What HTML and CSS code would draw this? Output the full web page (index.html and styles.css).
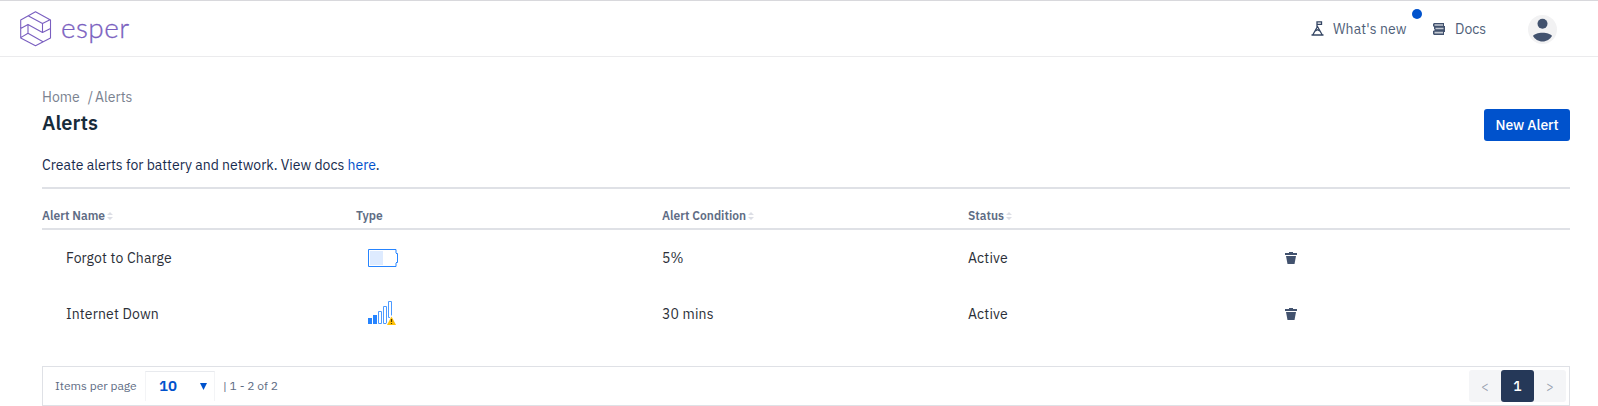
FILE: index.html
```html
<!DOCTYPE html>
<html lang="en">
<head>
<meta charset="utf-8">
<title>Alerts</title>
<link rel="stylesheet" href="styles.css">
</head>
<body>
<svg class="defs" width="0" height="0">
  <symbol id="sort" viewBox="0 0 6 8"><path d="M0 3 3 0l3 3zM0 5h6L3 8z" fill="#dcdee5"/></symbol>
  <symbol id="trash" viewBox="0 0 12 12"><path d="M4 0h4v1h4v2H0V1h4zM1 4h10l-1.500 8h-7z" fill="#42526e"/></symbol>
</svg>
<header class="topbar">
  <div class="brand">
    <svg width="32" height="36" viewBox="0 0 32 36" fill="none" stroke="#7a5fc0" stroke-width="1.1" stroke-linejoin="round">
      <path d="M15.500.8 30.500 9v18L15.500 34.800.7 27V9zM8 4.800 22.500 12.500 30.500 8.500M22.500 12.500V21.500L8 13.400.7 17.500M22.500 21.500 30.500 17.500M8 13.400v8.800L.7 26.600M8 22.200 23 30.800"/>
    </svg>
    <span class="wordmark">esper</span>
  </div>
  <nav class="nav">
    <a class="nav-item news">
      <svg width="13" height="15" viewBox="0 0 13 15" fill="none" stroke="#344563" stroke-width="1.3"><path d="M.5 14h12M2 13.500 6.500 5.500l4.500 8M6 6V.8h4.500v2.600H6M4.300 10l2.200-1.300L8.700 10"/></svg>
      <span>What's new</span><i class="dot"></i>
    </a>
    <a class="nav-item docs">
      <svg width="12" height="12" viewBox="0 0 12 12"><path d="M1 0h10v3h1v6h-1v3H1L0 11V8l2-1-1-1V4L0 3V1z" fill="#42526e"/><path d="M1.500 1.200h8.500v1.500H1.500zM2.500 4.700h8v1.600h-8zM1.500 8.800h8.500v1.700H1.500z" fill="#c4c9d2"/></svg>
      <span>Docs</span>
    </a>
    <svg class="avatar" width="29" height="29" viewBox="0 0 29 29"><circle cx="14.500" cy="14.500" r="14.500" fill="#f2f2f3"/><g fill="#42526e"><circle cx="14.500" cy="8.700" r="5"/><path d="M5 21c1-2 5-3.300 9.500-3.300S23 19 24 21c-1.800 3-5.300 5.500-9.500 5.500S6.800 24 5 21z"/></g></svg>
  </nav>
</header>
<main class="page">
  <div class="heading">
    <div>
      <div class="crumbs"><span>Home</span><span class="slash">/</span><span>Alerts</span></div>
      <h1>Alerts</h1>
    </div>
    <button class="new">New Alert</button>
  </div>
  <p class="intro">Create alerts for battery and network. View docs <a>here</a>.</p>
  <div class="table">
    <div class="row head">
      <div><span>Alert Name</span><svg width="6" height="8"><use href="#sort"/></svg></div>
      <div><span>Type</span></div>
      <div><span>Alert Condition</span><svg width="6" height="8"><use href="#sort"/></svg></div>
      <div><span>Status</span><svg width="6" height="8"><use href="#sort"/></svg></div>
      <div></div>
    </div>
    <div class="row">
      <div class="name">Forgot to Charge</div>
      <div class="type"><svg width="30" height="18" viewBox="0 0 30 18"><path d="M28 4V.5H.5v17H28V14M28 4.500h1.500v9H28" fill="none" stroke="#2684ff"/><path d="M2 2h13v14H2z" fill="#deebff"/></svg></div>
      <div>5%</div>
      <div>Active</div>
      <div class="action"><svg width="12" height="12"><use href="#trash"/></svg></div>
    </div>
    <div class="row">
      <div class="name">Internet Down</div>
      <div class="type signal"><svg width="28" height="24" viewBox="0 0 28 24"><path d="M0 17h4v6H0zM5 14h4v9H5z" fill="#2684ff"/><path d="M10.500 10.500h3v12h-3zM15.500 5.500h3v17h-3zM20.500.5h3v16h-3z" fill="#fff" stroke="#4c9aff"/><path d="M23.500 14 29 24H17.500z" fill="#fff"/><path d="M23.500 15.500 28 24h-9z" fill="#ffc107"/><path d="M23.500 18v3M23.500 22v1" stroke="#4d3a00" stroke-width="1.200"/></svg></div>
      <div>30 mins</div>
      <div>Active</div>
      <div class="action"><svg width="12" height="12"><use href="#trash"/></svg></div>
    </div>
  </div>
  <footer class="pager">
    <span class="per">Items per page</span>
    <div class="select"><b>10</b><svg width="7" height="7" viewBox="0 0 7 7"><path d="M0 0h7L3.500 7z" fill="#0052cc"/></svg></div>
    <span class="range">| 1 - 2 of 2</span>
    <div class="pages"><span>&lt;</span><span class="current">1</span><span>&gt;</span></div>
  </footer>
</main>
</body>
</html>
```
FILE: styles.css
```css
* { box-sizing: border-box; }
body { margin: 0; height: 406px; overflow: hidden; background: #fff; color: #2b2f38; font: 14px/20px "IBM Plex Sans", Roboto, sans-serif; }
svg { display: block; flex: none; }
.defs { position: absolute; }
.topbar { height: 57px; border-top: 1px solid #d8d8dc; border-bottom: 1px solid #ebebed; display: flex; justify-content: space-between; align-items: center; padding: 0 41px 0 20px; }
.brand { display: flex; align-items: center; gap: 9px; color: #7a5fc0; }
.wordmark { font: 300 28px/36px Lato, sans-serif; letter-spacing: 0.4px; padding-bottom: 4px; -webkit-text-stroke: 0.3px #7a5fc0; }
.nav { display: flex; align-items: center; color: #505f79; }
.nav-item { display: flex; align-items: center; }
.nav-item span { padding-top: 1px; }
.news { position: relative; width: 122px; gap: 9px; letter-spacing: 0.1px; }
.dot { position: absolute; left: 101px; top: -9px; width: 10px; height: 10px; border-radius: 50%; background: #0052cc; }
.docs { width: 95px; gap: 10px; }
.avatar { margin-top: 1px; }
.page { padding: 30px 28px 0 42px; }
.heading { display: flex; justify-content: space-between; height: 56px; }
.crumbs { display: flex; color: #7a8290; }
.slash { margin: 0 2px 0 8px; }
h1 { margin: 4px 0 0; font-size: 20px; line-height: 24px; font-weight: 600; color: #172b3a; }
.new { align-self: flex-start; margin-top: 22px; width: 86px; height: 32px; padding: 1px 0 0; border: 0; border-radius: 3px; background: #0052cc; color: #fff; font: 500 14px/31px "IBM Plex Sans", Roboto, sans-serif; letter-spacing: -0.1px; }
.intro { margin: 12px 0; color: #172b4d; }
.intro a { color: #0052cc; }
.table { border-top: 2px solid #dfe1e6; }
.row { height: 56px; display: grid; grid-template-columns: 314px 306px 306px 306px 1fr; align-items: center; letter-spacing: 0.15px; }
.head { height: 41px; padding-top: 15px; border-bottom: 2px solid #dfe1e6; font-size: 12px; font-weight: 600; letter-spacing: 0; color: #5e6c84; }
.head > div { display: flex; align-items: center; gap: 2px; }
.name { padding-left: 24px; }
.type { padding-left: 12px; }
.signal { padding-bottom: 2px; }
.action { padding-left: 11px; }
.pager { height: 40px; margin-top: 24px; border: 1px solid #dfe1e6; display: flex; align-items: center; padding: 0 3px 0 12px; font-size: 12px; color: #5e6c84; }
.per { width: 90px; }
.select { width: 70px; height: 30px; border: 1px solid #f3f4f6; border-top-color: #e8eaee; border-bottom: 0; display: flex; align-items: center; justify-content: space-between; padding: 0 7px 0 13px; color: #0052cc; }
.select b { font-size: 15px; font-weight: 600; padding-bottom: 1px; }
.range { padding-left: 8px; }
.pages { margin-left: auto; display: flex; width: 97px; height: 32px; border-radius: 3px; background: #f4f5f7; line-height: 33px; text-align: center; color: #97a0af; font-size: 13px; }
.pages span { width: 32px; }
.pages .current { width: 33px; border-radius: 3px; background: #253858; color: #fff; font-size: 14px; font-weight: 500; }
```
